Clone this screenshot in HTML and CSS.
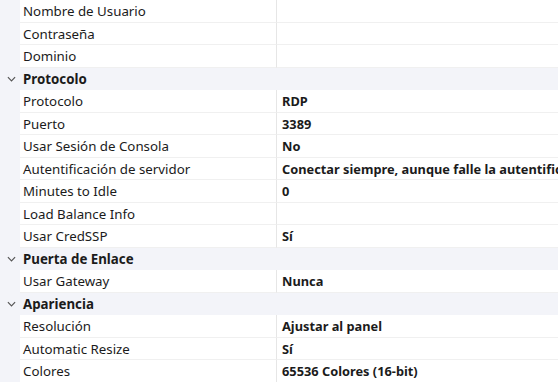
FILE: index.html
```html
<!DOCTYPE html>
<html lang="es">
<head>
    <meta charset="UTF-8">
    <title>Propiedades</title>
    <link rel="stylesheet" href="styles.css">
</head>
<body>
    <div class="grid">
        <div class="row"><span class="gutter"></span><span class="name">Nombre de Usuario</span><span class="value"></span></div>
        <div class="row"><span class="gutter"></span><span class="name">Contraseña</span><span class="value"></span></div>
        <div class="row"><span class="gutter"></span><span class="name">Dominio</span><span class="value"></span></div>

        <div class="row group"><span class="gutter"><svg class="chev" viewBox="0 0 10 6"><path d="M1 1 L5 5 L9 1"/></svg></span><span class="name">Protocolo</span></div>
        <div class="row"><span class="gutter"></span><span class="name">Protocolo</span><span class="value">RDP</span></div>
        <div class="row"><span class="gutter"></span><span class="name">Puerto</span><span class="value">3389</span></div>
        <div class="row"><span class="gutter"></span><span class="name">Usar Sesión de Consola</span><span class="value">No</span></div>
        <div class="row"><span class="gutter"></span><span class="name">Autentificación de servidor</span><span class="value">Conectar siempre, aunque falle la autentificación</span></div>
        <div class="row"><span class="gutter"></span><span class="name">Minutes to Idle</span><span class="value">0</span></div>
        <div class="row"><span class="gutter"></span><span class="name">Load Balance Info</span><span class="value"></span></div>
        <div class="row"><span class="gutter"></span><span class="name">Usar CredSSP</span><span class="value">Sí</span></div>

        <div class="row group"><span class="gutter"><svg class="chev" viewBox="0 0 10 6"><path d="M1 1 L5 5 L9 1"/></svg></span><span class="name">Puerta de Enlace</span></div>
        <div class="row"><span class="gutter"></span><span class="name">Usar Gateway</span><span class="value">Nunca</span></div>

        <div class="row group"><span class="gutter"><svg class="chev" viewBox="0 0 10 6"><path d="M1 1 L5 5 L9 1"/></svg></span><span class="name">Apariencia</span></div>
        <div class="row"><span class="gutter"></span><span class="name">Resolución</span><span class="value">Ajustar al panel</span></div>
        <div class="row"><span class="gutter"></span><span class="name">Automatic Resize</span><span class="value">Sí</span></div>
        <div class="row"><span class="gutter"></span><span class="name">Colores</span><span class="value">65536 Colores (16-bit)</span></div>
    </div>
</body>
</html>
```
FILE: styles.css
```css
body {
    margin: 0;
    background-color: #f3f4f9;
    font-family: "Noto Sans", "Open Sans", sans-serif;
    font-size: 13.3px;
    color: #1b1b1b;
    overflow: hidden;
}
.grid {
    width: 558px;
}
.row {
    display: flex;
    height: 22.5px;
    line-height: 22px;
    white-space: nowrap;
}
.gutter {
    width: 20px;
    flex: none;
    display: flex;
    align-items: center;
    justify-content: center;
}
.name {
    width: 257px;
    flex: none;
    padding-left: 3px;
    background-color: #fff;
    border-bottom: 1px solid #f0f0f0;
    border-right: 1px solid #e6e6e6;
    box-sizing: border-box;
    overflow: hidden;
}
.value {
    flex: 1;
    padding-left: 5px;
    background-color: #fff;
    border-bottom: 1px solid #f0f0f0;
    box-sizing: border-box;
    font-size: 12.8px;
    font-weight: bold;
    overflow: hidden;
}
.group .name {
    flex: 1;
    background-color: transparent;
    border: none;
    font-weight: bold;
}
.chev {
    width: 9px;
    height: 6px;
    margin-left: 2px;
    fill: none;
    stroke: #555;
    stroke-width: 1.3;
}
```
